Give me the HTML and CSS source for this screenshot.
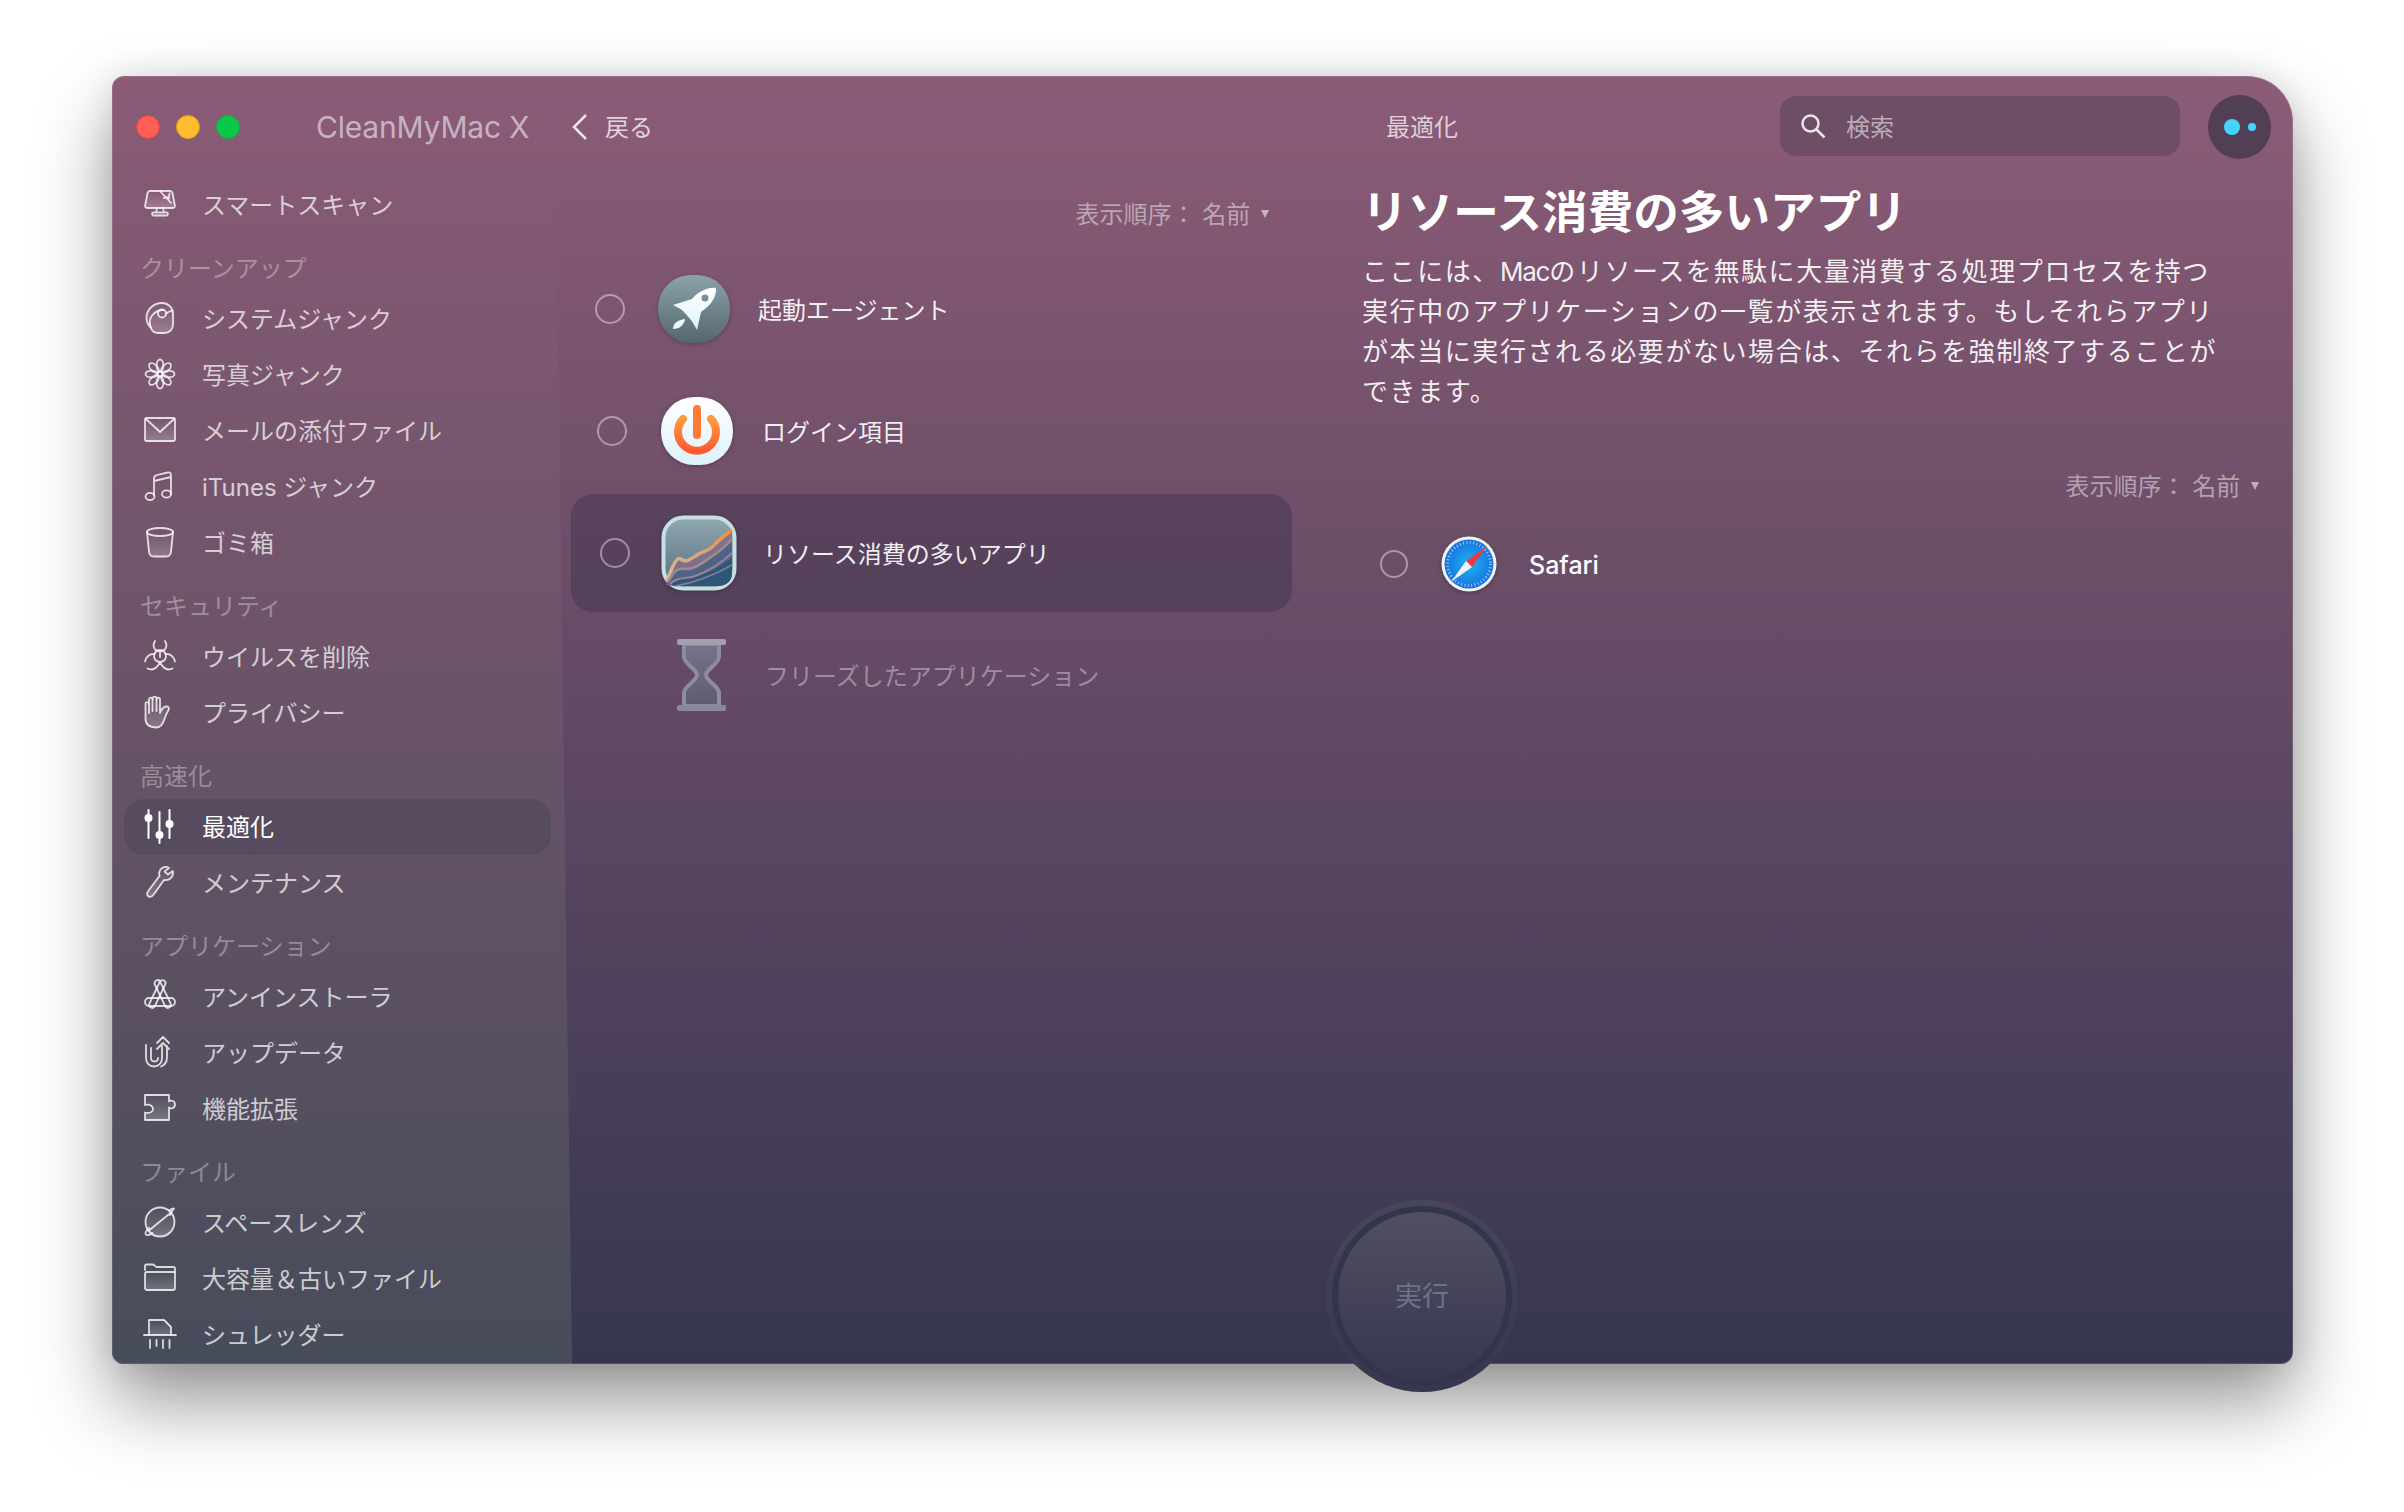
FILE: index.html
```html
<!DOCTYPE html>
<html lang="ja">
<head>
<meta charset="utf-8">
<title>CleanMyMac X</title>
<link rel="stylesheet" href="styles.css">
</head>
<body>
<svg class="defs" width="0" height="0" aria-hidden="true">
  <defs>
    <linearGradient id="ig" x1="0" y1="0" x2="0" y2="1"><stop offset="0" stop-color="#fff" stop-opacity="0"/><stop offset="1" stop-color="#fff" stop-opacity=".22"/></linearGradient>
    <linearGradient id="rocketBg" x1="0" y1="0" x2="0" y2="1"><stop offset="0" stop-color="#8ba3ab"/><stop offset="1" stop-color="#56666e"/></linearGradient>
    <linearGradient id="rocketBody" x1="0" y1="0" x2="0" y2="1"><stop offset="0" stop-color="#fff"/><stop offset="1" stop-color="#dff2fb"/></linearGradient>
    <linearGradient id="powerBg" x1="0" y1="0" x2="0" y2="1"><stop offset="0" stop-color="#fff"/><stop offset="1" stop-color="#dcf2fc"/></linearGradient>
    <linearGradient id="powerFg" x1="0" y1="0" x2="0" y2="1"><stop offset="0" stop-color="#ff9a3d"/><stop offset="1" stop-color="#ff5a30"/></linearGradient>
    <linearGradient id="chartBg" x1="0" y1="0" x2="0" y2="1"><stop offset="0" stop-color="#90a8b0"/><stop offset="1" stop-color="#566f7c"/></linearGradient>
    <linearGradient id="chartLine" x1="0" y1="0" x2="1" y2="0"><stop offset="0" stop-color="#d9b496"/><stop offset=".6" stop-color="#e0a078"/><stop offset="1" stop-color="#ff8a2a"/></linearGradient>
    <linearGradient id="glassFill" x1="0" y1="0" x2="0" y2="1"><stop offset="0" stop-color="#77738a"/><stop offset="1" stop-color="#5e5a70"/></linearGradient>
    <radialGradient id="safariBg" cx=".5" cy=".5" r=".5"><stop offset="0" stop-color="#1fb4f4"/><stop offset="1" stop-color="#1673dd"/></radialGradient>
  </defs>
</svg>

<main class="window">
  <div class="frame">
    <header class="topbar">
      <div class="lights">
        <span class="light light-red"></span>
        <span class="light light-yellow"></span>
        <span class="light light-green"></span>
      </div>
      <span class="app-name">CleanMyMac X</span>
      <svg class="chevron" viewBox="0 0 18 28"><path d="M15 2 3 14l12 12"/></svg>
      <span class="back">戻る</span>
      <span class="page-title">最適化</span>
      <div class="search">
        <svg class="search-icon" viewBox="0 0 26 26"><circle cx="10.5" cy="10.5" r="8"/><path d="m16.5 16.5 8 8"/></svg>
        <span class="search-text">検索</span>
      </div>
      <div class="avatar"><span class="dot-big"></span><span class="dot-small"></span></div>
    </header>

    <div class="body">
      <nav class="sidebar">
        <a class="nav-item">
          <svg class="ico" viewBox="0 0 32 32"><path class="f" d="M6 3h20a2.500 2.500 0 0 1 2.400 2l2.500 12.500a2 2 0 0 1-2 2.500H3.100a2 2 0 0 1-2-2.500L3.600 5A2.500 2.500 0 0 1 6 3z"/><path d="M13 20l-1 4.500h8l-1-4.500M9 27.500h14a1.500 1.500 0 0 0-1.500-3h-11a1.500 1.500 0 0 0-1.500 3zM16 3l11 12M25.500 5.500 24.500 12M24.500 9l-4.500 1"/></svg>
          <span>スマートスキャン</span>
        </a>

        <h2 class="nav-head">クリーンアップ</h2>
        <a class="nav-item">
          <svg class="ico" viewBox="0 0 32 32"><path class="f" d="M18 1c6 0 11 4.500 11 11v10.500c0 5-3.500 8.500-8.500 8.500H14c-4 0-6-2-7-5C5 24 2.500 20 2.500 16 2.500 8 9 1 18 1z"/><circle cx="18" cy="11.500" r="4"/><path d="M7 26c-2-5-1.500-9.500 1.500-13 3-3.500 7-5 10.500-5M28.500 8.500C26.500 9 24 10 22 11.500"/></svg>
          <span>システムジャンク</span>
        </a>
        <a class="nav-item">
          <svg class="ico" viewBox="0 0 32 32"><g class="petals"><ellipse cx="16" cy="7.500" rx="3.400" ry="6"/><ellipse cx="16" cy="7.500" rx="3.400" ry="6" transform="rotate(45 16 16)"/><ellipse cx="16" cy="7.500" rx="3.400" ry="6" transform="rotate(90 16 16)"/><ellipse cx="16" cy="7.500" rx="3.400" ry="6" transform="rotate(135 16 16)"/><ellipse cx="16" cy="7.500" rx="3.400" ry="6" transform="rotate(180 16 16)"/><ellipse cx="16" cy="7.500" rx="3.400" ry="6" transform="rotate(225 16 16)"/><ellipse cx="16" cy="7.500" rx="3.400" ry="6" transform="rotate(270 16 16)"/><ellipse cx="16" cy="7.500" rx="3.400" ry="6" transform="rotate(315 16 16)"/></g><circle cx="16" cy="16" r="2.400"/></svg>
          <span>写真ジャンク</span>
        </a>
        <a class="nav-item">
          <svg class="ico" viewBox="0 0 32 32"><rect class="f" x="1" y="4" width="30" height="23" rx="1.500"/><path d="M2 5l14 13L30 5"/></svg>
          <span>メールの添付ファイル</span>
        </a>
        <a class="nav-item">
          <svg class="ico" viewBox="0 0 32 32"><path d="M10 25V8.500c0-2 1-3 3-3.500l11-2.500c2-.4 3 .5 3 2.500v19M10 11l17-4"/><ellipse cx="6" cy="26.500" rx="4.500" ry="3.600"/><ellipse cx="22.500" cy="24" rx="4.500" ry="3.600"/></svg>
          <span>iTunes ジャンク</span>
        </a>
        <a class="nav-item">
          <svg class="ico" viewBox="0 0 32 32"><ellipse cx="16" cy="6" rx="13" ry="4"/><path class="f" d="M3 6l2 20c.4 3 2.500 4.500 5 4.500h12c2.500 0 4.600-1.500 5-4.500l2-20"/></svg>
          <span>ゴミ箱</span>
        </a>

        <h2 class="nav-head">セキュリティ</h2>
        <a class="nav-item">
          <svg class="ico" viewBox="0 0 32 32"><circle cx="16" cy="16" r="6"/><path d="M11 1c-3 5-1 10 5 10.500C22 11 24 6 21 1M1 21.500c1-5 5-8 9.500-7.500M31 21.500c-1-5-5-8-9.500-7.500M3.500 28.500c4 2 8.500 1 12.500-6 4 7 8.500 8 12.500 6M16 12v5"/></svg>
          <span>ウイルスを削除</span>
        </a>
        <a class="nav-item">
          <svg class="ico" viewBox="0 0 32 32"><path class="f" d="M1.500 8c0-2.500 3.500-2.500 3.500 0V3.500C5 1 8.500 1 8.500 3.500V2.500C8.500 0 12.500 0 12.500 2.500v1c0-2.500 3.500-2.500 3.500 0V17c1-2.500 3-6 6-6.500 2.500-.3 3.500 1.500 2.500 3.500-1.500 2.500-3 6-4 9-1.500 5-3.500 8.500-8 8.500-7 0-11-3-11-9z"/><path d="M5 8v9M8.500 3.500V15M12.500 3.500V15"/></svg>
          <span>プライバシー</span>
        </a>

        <h2 class="nav-head">高速化</h2>
        <a class="nav-item nav-active">
          <svg class="ico ico-solid" viewBox="0 0 32 32"><path d="M4.500 0v28M15.500 2v31M25.500 0v28"/><circle cx="4.500" cy="8" r="3" /><circle cx="15.500" cy="25" r="3"/><circle cx="25.500" cy="14" r="3"/></svg>
          <span>最適化</span>
        </a>
        <a class="nav-item">
          <svg class="ico" viewBox="0 0 32 32"><path class="f" d="M21 1c-4 .5-7 4.500-5.500 9L5 24c-2 2.500-2.500 4.500-1 6s4 .8 5.500-1.200L20 14c4 1 9-2 9-7.500 0-.6-.1-1-.3-1.500L24 8.500l-3.500-3L25 2c-1.200-.8-2.500-1.200-4-1z"/></svg>
          <span>メンテナンス</span>
        </a>

        <h2 class="nav-head">アプリケーション</h2>
        <a class="nav-item">
          <svg class="ico" viewBox="0 0 32 32"><rect x="15.700" y="-1" width="6" height="30" rx="3" transform="rotate(-25.700 18.700 14)"/><rect x="10.300" y="-1" width="6" height="30" rx="3" transform="rotate(25.700 13.300 14)"/><rect x="1" y="18" width="30" height="8" rx="4"/></svg>
          <span>アンインストーラ</span>
        </a>
        <a class="nav-item">
          <svg class="ico" viewBox="0 0 32 32"><path d="M2 9v13c0 5 3.500 8.500 8 8.500s8-3.500 8-8V10M7 12v10c0 2 1.500 3.500 3.500 3.500s3.500-1.500 3.500-3.500M18 10V22M13 7l6-6 6 6M13 13l6-6 6 6M23 10v11c0 5-2 8-6 9.500"/></svg>
          <span>アップデータ</span>
        </a>
        <a class="nav-item">
          <svg class="ico" viewBox="0 0 32 32"><path class="f" d="M1 3h24v6.500c1-1.500 6-1.500 6 3s-5 4.500-6 3V28H1v-7.500c5 1.500 8-1 8-3.500s-3-5.500-8-4z"/></svg>
          <span>機能拡張</span>
        </a>

        <h2 class="nav-head">ファイル</h2>
        <a class="nav-item">
          <svg class="ico" viewBox="0 0 32 32"><circle class="f" cx="16" cy="16" r="14.500"/><path d="M5 24.500 27 6.500M26 9c1-2 2-4 4-6.500-1.500 0-3.500 1-5 2M5 22c-2 2-4 4-3.500 6 .8 2 4 1 7-1"/></svg>
          <span>スペースレンズ</span>
        </a>
        <a class="nav-item">
          <svg class="ico" viewBox="0 0 32 32"><path d="M1 8V4c0-1 .6-1.500 1.500-1.500H9c1.500 0 2 2.500 4 2.500h16.500c1 0 1.500.5 1.500 1.500V10"/><rect class="f" x="1" y="10" width="30" height="18" rx="2"/></svg>
          <span>大容量＆古いファイル</span>
        </a>
        <a class="nav-item">
          <svg class="ico" viewBox="0 0 32 32"><path class="f" d="M5 17V2h15l7 7v8"/><path d="M0 17h32M6 22v8M12.500 22v6M19 22v8M25.500 22v8"/></svg>
          <span>シュレッダー</span>
        </a>
      </nav>

      <section class="list-col">
        <div class="sort sort-list">表示順序： 名前 <i class="caret"></i></div>
        <div class="list">
          <div class="row row-first">
            <span class="radio"></span>
            <svg class="app-icon" viewBox="0 0 72 72"><rect width="72" height="68" y="2" rx="33" fill="url(#rocketBg)"/><path d="M58 15C50 14 41 18 34 26L15 32C20 34 24 37 26 39L33 47C35 50 37 53 39 57L43 39C52 33 59 24 58 15Z" fill="url(#rocketBody)"/><circle cx="47" cy="25" r="3.500" fill="#7a8e96"/><path d="M15 56C15 50 20 47 27 46C26 52 22 56 15 56Z" fill="url(#rocketBody)"/></svg>
            <span class="row-label">起動エージェント</span>
          </div>
          <div class="row row-second">
            <span class="radio"></span>
            <svg class="app-icon" viewBox="0 0 72 72"><rect width="72" height="68" y="2" rx="33" fill="url(#powerBg)"/><path d="M22 24A19 19 0 1 0 50 24" fill="none" stroke="url(#powerFg)" stroke-width="8" stroke-linecap="round"/><path d="M36 14V40" fill="none" stroke="#ff7a34" stroke-width="8" stroke-linecap="round"/></svg>
            <span class="row-label">ログイン項目</span>
          </div>
          <div class="row row-third row-selected">
            <span class="radio"></span>
            <svg class="app-icon app-icon-chart" viewBox="0 0 76 76"><rect x="2.500" y="2.500" width="71" height="71" rx="20" fill="url(#chartBg)" stroke="#c5dfe2" stroke-width="4"/><path d="M5 70C8 60 12 46 17 44 20 43 22 46 25 46 30 45 36 39 42 37 47 35 50 34 53 30 59 24 64 20 71 15V58C71 66 65 71 57 71Z" fill="#7f6f8d" opacity=".85"/><path d="M6 68C10 58 16 54 24 55 32 55 40 49 50 42 58 37 64 32 71 27V58C71 66 65 71 57 71H14Z" fill="#4f6288"/><path d="M8 70C14 64 22 65 32 63 44 59 58 53 71 43V58C71 66 65 71 57 71H14Z" fill="#2f5578"/><path d="M6 66C9 58 13 46 17 44 20 43 22 46 25 46 30 45 36 39 42 37 47 35 50 34 53 30 59 24 64 20 71 15" fill="none" stroke="url(#chartLine)" stroke-width="3.500"/><path d="M7 67C12 58 16 52 24 54 32 55 40 49 50 42 58 37 64 32 71 24" fill="none" stroke="#a68a88" stroke-width="2.500"/><path d="M9 69C16 62 24 64 34 61 46 57 58 50 71 38" fill="none" stroke="#9a8390" stroke-width="2"/><path d="M14 71C26 69 48 63 71 50" fill="none" stroke="#7c7f95" stroke-width="1.500"/></svg>
            <span class="row-label">リソース消費の多いアプリ</span>
          </div>
          <div class="row row-disabled">
            <svg class="glass" viewBox="0 0 49 72"><path d="M7 5H42V18C42 25 29 30 29 36S42 47 42 54V67H7V54C7 47 20 42 20 36S7 25 7 18Z" fill="url(#glassFill)" stroke="#8f8c9f" stroke-width="4"/><rect width="49" height="6" rx="2" fill="#a19eae"/><rect y="66" width="49" height="6" rx="2" fill="#8b8899"/></svg>
            <span class="row-label">フリーズしたアプリケーション</span>
          </div>
        </div>
      </section>

      <section class="detail">
        <h1 class="detail-title">リソース消費の多いアプリ</h1>
        <p class="detail-text">ここには、<span class="latin-tight">Mac</span>のリソースを無駄に大量消費する処理プロセスを持つ<br>実行中のアプリケーションの一覧が表示されます。もしそれらアプリ<br>が本当に実行される必要がない場合は、それらを強制終了することが<br>できます。</p>
        <div class="sort sort-detail">表示順序： 名前 <i class="caret"></i></div>
        <div class="detail-row">
          <span class="radio radio-small"></span>
          <svg class="safari" viewBox="0 0 56 56"><circle cx="28" cy="28" r="27.500" fill="#f2f4f6"/><circle cx="28" cy="28" r="24.500" fill="url(#safariBg)"/><circle cx="28" cy="28" r="21.500" fill="none" stroke="#cfeaff" stroke-opacity=".7" stroke-width="3" stroke-dasharray="1 2.380"/><path d="M46 10 31 31 25 25Z" fill="#f0383e"/><path d="M10 46 25 25 31 31Z" fill="#f4f5f7"/></svg>
          <span class="detail-row-label">Safari</span>
        </div>
      </section>
    </div>
  </div>

  <button class="run" type="button"><span class="run-inner"><span class="run-label">実行</span></span></button>
</main>
</body>
</html>
```

FILE: styles.css
```css
* {
  box-sizing: border-box;
}

html,
body {
  margin: 0;
  height: 1512px;
  overflow: hidden;
  background: #fff;
}

body {
  font-family: "Inter", "Noto Sans CJK JP", sans-serif;
  font-size: 24px;
  color: #fff;
}

.defs {
  display: block;
  height: 0;
}

.window {
  position: relative;
  width: 2181px;
  height: 1288px;
  margin: 76px 0 0 112px;
  border-radius: 12px 46px 12px 12px;
  box-shadow: 0 38px 76px rgba(0, 0, 0, 0.42), 0 0 30px rgba(0, 0, 0, 0.1);
}

.frame {
  position: relative;
  display: flex;
  flex-direction: column;
  height: 100%;
  overflow: hidden;
  border-radius: inherit;
  background: linear-gradient(180deg, #8c5c77 0%, #363650 100%);
}

.frame::after {
  content: "";
  position: absolute;
  inset: 0;
  border: 1px solid rgba(255, 255, 255, 0.12);
  border-radius: inherit;
  pointer-events: none;
}

.topbar {
  display: flex;
  align-items: center;
  flex: 0 0 101px;
  padding: 0 0 0 24px;
}

.lights {
  display: flex;
  gap: 16px;
}

.light {
  width: 24px;
  height: 24px;
  border-radius: 50%;
}

.light-red {
  background: #ff5f57;
  border: 1px solid #e0443e;
}

.light-yellow {
  background: #ffbd2e;
  border: 1px solid #dea123;
}

.light-green {
  background: #0cc84a;
  border: 1px solid #12ac3e;
}

.app-name {
  margin-left: 76px;
  width: 213px;
  font-size: 30px;
  letter-spacing: -0.2px;
  white-space: nowrap;
  color: rgba(255, 255, 255, 0.55);
}

.chevron {
  width: 18px;
  height: 28px;
  margin-left: 42px;
  fill: none;
  stroke: rgba(255, 255, 255, 0.85);
  stroke-width: 2.5;
}

.back {
  margin-left: 16px;
  margin-top: -2px;
  width: 48px;
  white-space: nowrap;
  color: rgba(255, 255, 255, 0.75);
}

.page-title {
  margin-left: 733px;
  margin-top: -2px;
  width: 72px;
  color: rgba(255, 255, 255, 0.72);
}

.search {
  display: flex;
  align-items: center;
  gap: 20px;
  width: 400px;
  height: 60px;
  margin-left: 322px;
  margin-top: -2px;
  padding-left: 20px;
  border-radius: 16px;
  background: #6d4e66;
  color: rgba(255, 255, 255, 0.55);
}

.search-text {
  margin-top: -1px;
}

.search-icon {
  width: 26px;
  height: 26px;
  fill: none;
  stroke: rgba(255, 255, 255, 0.85);
  stroke-width: 2.5;
}

.avatar {
  display: flex;
  align-items: center;
  justify-content: center;
  gap: 8px;
  width: 63px;
  height: 64px;
  margin-left: 28px;
  border-radius: 50%;
  background: #503f55;
}

.dot-big {
  width: 16px;
  height: 16px;
  border-radius: 50%;
  background: #45d4ff;
}

.dot-small {
  width: 8px;
  height: 8px;
  border-radius: 50%;
  background: #45d4ff;
}

.body {
  display: flex;
  flex: 1;
  min-height: 0;
}

.sidebar {
  flex: 0 0 460px;
  padding-right: 21px;
  padding-left: 12px;
  background: linear-gradient(180deg, #855974 0%, #474c5a 100%);
  clip-path: polygon(0 0, 96.500% 0, 100% 100%, 0 100%);
}

.nav-item {
  display: flex;
  align-items: center;
  gap: 26px;
  height: 56px;
  padding-left: 20px;
  border-radius: 20px;
  white-space: nowrap;
  color: rgba(255, 255, 255, 0.72);
}

.nav-item > span {
  margin-top: -3px;
}

.nav-active {
  background: #574b5f;
  color: #fff;
}

.nav-head {
  height: 44px;
  margin: 14px 0 0;
  padding-left: 16px;
  font-size: 24px;
  font-weight: 400;
  line-height: 44px;
  color: rgba(255, 255, 255, 0.34);
}

.ico {
  flex: 0 0 32px;
  width: 32px;
  height: 32px;
  margin-top: -2px;
  overflow: visible;
  fill: none;
  stroke: rgba(255, 255, 255, 0.8);
  stroke-width: 1.800;
  stroke-linejoin: round;
  stroke-linecap: round;
}

.ico .f {
  fill: url(#ig);
}

.ico-solid {
  stroke: #fff;
  fill: #fff;
  stroke-width: 2;
}

.list-col {
  flex: 0 0 721px;
  margin-left: -1px;
}

.sort {
  display: flex;
  align-items: center;
  justify-content: flex-end;
  white-space: pre;
  color: rgba(255, 255, 255, 0.47);
}

.sort-list {
  height: 73px;
  padding-right: 23px;
  padding-bottom: 3px;
}

.caret {
  width: 0;
  height: 0;
  margin: 4px 0 0 4px;
  border-top: 8px solid rgba(255, 255, 255, 0.55);
  border-left: 4px solid transparent;
  border-right: 4px solid transparent;
}

.list {
  display: flex;
  flex-direction: column;
  gap: 4px;
}

.row {
  display: flex;
  align-items: center;
  height: 118px;
  border-radius: 22px;
}

.row-first {
  gap: 28px;
  padding-left: 24px;
}

.row-second {
  gap: 29px;
  padding-left: 26px;
}

.row-third {
  gap: 26px;
  padding-left: 29px;
}

.row-selected {
  background: rgba(50, 44, 68, 0.36);
}

.row-disabled {
  gap: 39px;
  padding-left: 106px;
}

.radio {
  flex: 0 0 30px;
  width: 30px;
  height: 30px;
  border: 2px solid rgba(255, 255, 255, 0.42);
  border-radius: 50%;
}

.row .radio {
  margin-right: 5px;
}

.app-icon {
  flex: 0 0 72px;
  width: 72px;
  height: 72px;
  filter: drop-shadow(0 1px 2px rgba(0, 0, 0, 0.25));
}

.app-icon-chart {
  flex-basis: 76px;
  width: 76px;
  height: 76px;
}

.glass {
  flex: 0 0 49px;
  width: 49px;
  height: 72px;
}

.row-label {
  margin-top: -1px;
  white-space: nowrap;
  color: rgba(255, 255, 255, 0.92);
}

.row-disabled .row-label {
  color: rgba(255, 255, 255, 0.38);
}

.detail {
  flex: 1;
  margin-left: 70px;
  margin-right: 34px;
}

.detail-title {
  height: 70px;
  margin: 0 0 5px;
  font-size: 45.600px;
  font-weight: 700;
  line-height: 72px;
  white-space: nowrap;
}

.detail-text {
  margin: 0;
  font-size: 26px;
  letter-spacing: 1.580px;
  line-height: 40px;
  white-space: nowrap;
  color: rgba(255, 255, 255, 0.92);
}

.latin-tight {
  letter-spacing: -1.200px;
}

.sort-detail {
  height: 36px;
  margin-top: 54px;
}

.detail-row {
  display: flex;
  align-items: center;
  height: 72px;
  margin-top: 26px;
  padding-left: 18px;
}

.radio-small {
  flex-basis: 28px;
  width: 28px;
  height: 28px;
  margin-right: 33px;
}

.safari {
  flex: 0 0 56px;
  width: 56px;
  height: 56px;
  filter: drop-shadow(0 1px 2px rgba(0, 0, 0, 0.3));
}

.detail-row-label {
  margin-left: 32px;
  margin-top: 2px;
  font-size: 25px;
  font-weight: 500;
}

.run {
  position: absolute;
  left: 1214px;
  top: 1124px;
  width: 192px;
  height: 192px;
  padding: 6px;
  border: 0;
  border-radius: 50%;
  font: inherit;
  background: linear-gradient(180deg, #484659 0%, #363650 100%);
}

.run-inner {
  display: flex;
  align-items: center;
  justify-content: center;
  width: 100%;
  height: 100%;
  border: 6px solid #33364a;
  border-radius: 50%;
  background: linear-gradient(180deg, #514f61 0%, #373750 100%);
  background-clip: padding-box;
  font-size: 27px;
  color: #6f7286;
}

.run-label {
  margin-top: -3px;
}
```
